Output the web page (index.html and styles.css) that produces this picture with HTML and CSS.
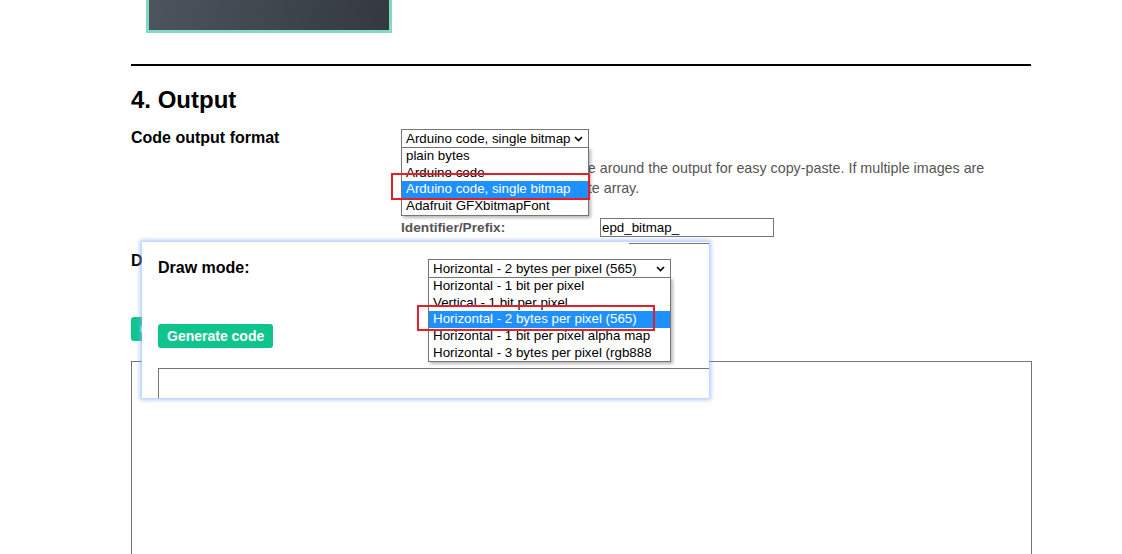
FILE: index.html
```html
<!DOCTYPE html>
<html>
<head>
<meta charset="utf-8">
<link rel="stylesheet" href="styles.css">
</head>
<body>
<div class="page">
  <div class="preview"></div>
  <hr class="rule">
  <h2 class="title">4. Output</h2>
  <div class="row">
    <div class="label">Code output format</div>
    <div class="ctrl">
      <div class="select sel-format">
        <span>Arduino code, single bitmap</span>
        <svg class="chev" width="9" height="6" viewBox="0 0 9 6"><path d="M1 1 L4.5 4.5 L8 1" fill="none" stroke="#000" stroke-width="1.6"/></svg>
        <ul class="menu">
          <li>plain bytes</li>
          <li>Arduino code</li>
          <li class="on">Arduino code, single bitmap</li>
          <li>Adafruit GFXbitmapFont</li>
        </ul>
        <span class="mark mark-format"></span>
      </div>
      <p class="desc">Adds some extra Arduino code around the output for easy copy-paste. If multiple images are loaded, generates a single byte array.</p>
      <div class="ident">
        <span class="ident-label">Identifier/Prefix:</span>
        <div class="input">epd_bitmap_</div>
      </div>
    </div>
  </div>
  <div class="row">
    <div class="label">Draw mode:</div>
    <div class="ctrl">
      <div class="select sel-draw">
        <span>Horizontal - 2 bytes per pixel (565)</span>
        <svg class="chev" width="9" height="6" viewBox="0 0 9 6"><path d="M1 1 L4.5 4.5 L8 1" fill="none" stroke="#000" stroke-width="1.6"/></svg>
      </div>
    </div>
  </div>
  <button class="btn">Generate code</button>
  <textarea class="code"></textarea>
</div>

<div class="inset">
  <div class="inset-edge"></div>
  <div class="row">
    <div class="label">Draw mode:</div>
    <div class="ctrl">
      <div class="select sel-draw">
        <span>Horizontal - 2 bytes per pixel (565)</span>
        <svg class="chev" width="9" height="6" viewBox="0 0 9 6"><path d="M1 1 L4.5 4.5 L8 1" fill="none" stroke="#000" stroke-width="1.6"/></svg>
        <ul class="menu">
          <li>Horizontal - 1 bit per pixel</li>
          <li>Vertical - 1 bit per pixel</li>
          <li class="on">Horizontal - 2 bytes per pixel (565)</li>
          <li>Horizontal - 1 bit per pixel alpha map</li>
          <li>Horizontal - 3 bytes per pixel (rgb888</li>
        </ul>
        <span class="mark mark-draw"></span>
      </div>
    </div>
  </div>
  <button class="btn">Generate code</button>
  <textarea class="code"></textarea>
</div>
</body>
</html>
```
FILE: styles.css
```css
* { box-sizing: border-box; }

body {
  margin: 0;
  height: 554px;
  overflow: hidden;
  position: relative;
  background: #fff;
  color: #000;
  font-family: "Liberation Sans", Arial, sans-serif;
}

.page {
  padding-left: 131px;
  width: 1032px;
}

.preview {
  margin-left: 15px;
  width: 246px;
  height: 33px;
  border: 3px solid #80d9c1;
  border-top: 0;
  background: linear-gradient(100deg, #4d545d, #343940);
}

.rule {
  margin: 31px 0 0;
  border: 0;
  height: 2px;
  width: 900px;
  background: #000;
}

.title {
  margin: 20px 0 0;
  font-size: 24px;
  line-height: 28px;
  font-weight: bold;
}

.row {
  display: grid;
  grid-template-columns: 270px 1fr;
  margin-top: 14px;
}

.label {
  font-size: 16px;
  font-weight: bold;
  line-height: 19px;
}

.select {
  position: relative;
  margin-top: 1px;
  height: 19px;
  border: 1px solid #767676;
  background: #fff;
  padding: 0 5px 0 4px;
  display: flex;
  align-items: center;
  justify-content: space-between;
  font-size: 13.333px;
  line-height: 17px;
  white-space: nowrap;
}

.sel-format { width: 188px; }
.sel-draw { width: 243px; }

.chev { display: block; flex: none; }

.menu {
  position: absolute;
  left: -1px;
  top: 100%;
  width: calc(100% + 2px);
  margin: 0;
  padding: 0;
  list-style: none;
  background: #fff;
  border: 1px solid #767676;
  box-shadow: 2px 2px 3px rgba(0, 0, 0, 0.28);
  z-index: 2;
}

.menu li {
  height: 16.667px;
  line-height: 16.667px;
  padding-left: 4px;
  font-size: 13.333px;
  white-space: nowrap;
}

.menu li.on {
  background: #1e90ff;
  color: #fff;
}

.mark {
  position: absolute;
  border: 2px solid #e3202a;
  z-index: 3;
}

.mark-format {
  left: -11px;
  top: 43px;
  width: 199px;
  height: 27px;
}

.mark-draw {
  left: -12px;
  top: 45px;
  width: 238px;
  height: 26px;
}

.desc {
  margin: 10px 0 0;
  width: 625px;
  font-size: 14.3px;
  line-height: 20px;
  color: #555;
}

.ident {
  display: flex;
  margin-top: 20px;
}

.ident-label {
  width: 199px;
  font-size: 13.7px;
  font-weight: bold;
  line-height: 19px;
  color: #555;
}

.input {
  width: 174px;
  height: 19px;
  border: 1px solid #767676;
  padding-left: 1px;
  font-size: 13.333px;
  line-height: 17px;
}

.btn {
  display: block;
  margin-top: 46px;
  height: 24px;
  padding: 0 9px;
  border: 0;
  border-radius: 3px;
  background: #10c48e;
  color: #fff;
  font: bold 14px/24px "Liberation Sans", Arial, sans-serif;
}

.code {
  display: block;
  margin-top: 20px;
  width: 901px;
  height: 260px;
  border: 1px solid #767676;
  resize: none;
  background: #fff;
}

.inset {
  position: absolute;
  left: 142px;
  top: 242px;
  width: 567px;
  height: 156px;
  padding-left: 16px;
  overflow: hidden;
  background: #fff;
  box-shadow: 0 0 4px 2px rgba(130, 175, 255, 0.65);
  z-index: 5;
}

.inset-edge {
  margin: 1px 0 0 471px;
  width: 120px;
  height: 1px;
  background: #767676;
}
```
